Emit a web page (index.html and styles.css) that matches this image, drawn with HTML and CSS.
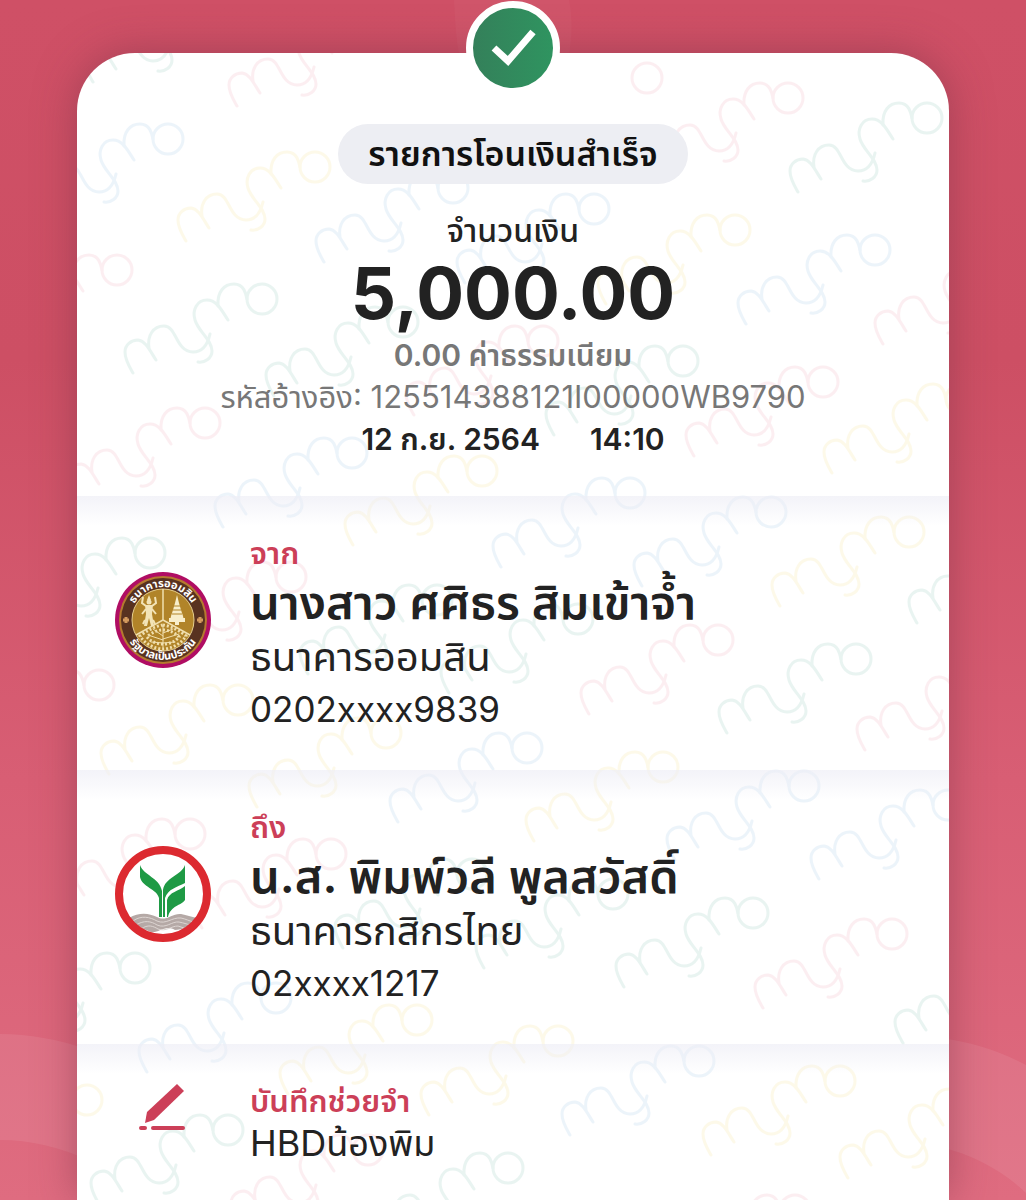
FILE: index.html
```html
<!DOCTYPE html>
<html lang="th">
<head>
    <meta charset="UTF-8">
    <meta name="viewport" content="width=device-width, initial-scale=1.0">
    <title>รายการโอนเงินสำเร็จ</title>
    <link rel="stylesheet" href="styles.css">
</head>
<body>
    <!-- background rings -->
    <svg class="rings" viewBox="0 0 1026 1200" preserveAspectRatio="xMidYMax slice" aria-hidden="true">
        <path class="ring" d="M0 1034 C30 1034 56 1039 90 1050 V1161 C60 1147 30 1140 0 1140 Z"/>
        <path class="ring" d="M940 1038 C972 1042 1000 1051 1026 1065 V1193 C1004 1172 975 1155 940 1147 Z"/>
        <path class="ring faint" d="M454 0 H569 C573 20 572 40 568 60 H460 C456 40 455 20 454 0 Z"/>
    </svg>

    <main class="card">
        <svg class="watermark" viewBox="77 53 872 1147" preserveAspectRatio="xMidYMin slice" aria-hidden="true">
            <defs>
                <g id="mark">
                    <path d="M-129 74 C-133 67 -137 61 -137 53 C-137 46 -131 41 -124 41 C-116 42 -112 52 -106 61"/>
                    <path d="M-113 49 C-115 37 -109 27 -98 27 C-85 27 -87 52 -69 53 C-59 53 -54 44 -52 35"/>
                    <path d="M-34 21 C-40 12 -45 1 -55 1 C-65 1 -70 11 -67 21 C-64 32 -50 41 -50 52 C-50 59 -57 64 -64 63"/>
                    <path d="M-44 7 C-45 -7 -38 -15 -28 -15 C-18 -15 -16 -5 -15 0"/>
                    <circle r="15"/>
                </g>
            </defs>
            <g class="blue">
                <use href="#mark" x="168" y="139"/>
                <use href="#mark" x="453" y="188"/>
                <use href="#mark" x="594" y="209"/>
                <use href="#mark" x="875" y="250"/>
                <use href="#mark" x="352" y="453"/>
                <use href="#mark" x="630" y="493"/>
                <use href="#mark" x="771" y="512"/>
                <use href="#mark" x="527" y="748"/>
                <use href="#mark" x="804" y="786"/>
                <use href="#mark" x="948" y="805"/>
                <use href="#mark" x="276" y="998"/>
                <use href="#mark" x="699" y="1061"/>
            </g>
            <g class="green">
                <use href="#mark" x="222" y="8"/>
                <use href="#mark" x="927" y="118"/>
                <use href="#mark" x="262" y="299"/>
                <use href="#mark" x="403" y="322"/>
                <use href="#mark" x="683" y="361"/>
                <use href="#mark" x="150" y="553"/>
                <use href="#mark" x="437" y="600"/>
                <use href="#mark" x="578" y="619"/>
                <use href="#mark" x="856" y="659"/>
                <use href="#mark" x="1046" y="549"/>
                <use href="#mark" x="472" y="874"/>
                <use href="#mark" x="613" y="894"/>
                <use href="#mark" x="753" y="913"/>
                <use href="#mark" x="1032" y="969"/>
                <use href="#mark" x="135" y="968"/>
                <use href="#mark" x="228" y="1130"/>
                <use href="#mark" x="508" y="1168"/>
            </g>
            <g class="yellow">
                <use href="#mark" x="315" y="167"/>
                <use href="#mark" x="735" y="230"/>
                <use href="#mark" x="961" y="399"/>
                <use href="#mark" x="482" y="471"/>
                <use href="#mark" x="909" y="532"/>
                <use href="#mark" x="238" y="700"/>
                <use href="#mark" x="386" y="733"/>
                <use href="#mark" x="663" y="767"/>
                <use href="#mark" x="417" y="1020"/>
                <use href="#mark" x="558" y="1041"/>
                <use href="#mark" x="840" y="1081"/>
                <use href="#mark" x="87" y="1100"/>
                <use href="#mark" x="977" y="1104"/>
            </g>
            <g class="pink">
                <use href="#mark" x="366" y="32"/>
                <use href="#mark" x="788" y="98"/>
                <use href="#mark" x="117" y="270"/>
                <use href="#mark" x="1012" y="270"/>
                <use href="#mark" x="543" y="341"/>
                <use href="#mark" x="823" y="382"/>
                <use href="#mark" x="205" y="423"/>
                <use href="#mark" x="291" y="577"/>
                <use href="#mark" x="718" y="640"/>
                <use href="#mark" x="994" y="676"/>
                <use href="#mark" x="99" y="685"/>
                <use href="#mark" x="190" y="834"/>
                <use href="#mark" x="331" y="854"/>
                <use href="#mark" x="892" y="934"/>
                <use href="#mark" x="368" y="1150"/>
                <use href="#mark" x="795" y="1210"/>
                <circle cx="647" cy="78" r="15"/>
            </g>
        </svg>

        <div class="badge">
            <svg viewBox="0 0 80 80" width="80" height="80" role="img" aria-label="สำเร็จ">
                <path d="M21 40 L35 53 L60 24" fill="none" stroke="#fff" stroke-width="7"/>
            </svg>
        </div>

        <header class="summary">
            <h1 class="status">รายการโอนเงินสำเร็จ</h1>
            <p class="amount-label">จำนวนเงิน</p>
            <p class="amount">5,000.00</p>
            <p class="fee">0.00 ค่าธรรมเนียม</p>
            <p class="ref">รหัสอ้างอิง: 125514388121I00000WB9790</p>
            <p class="date"><span>12 ก.ย. 2564</span><span>14:10</span></p>
        </header>

        <section class="row">
            <div class="icon">
                <svg viewBox="0 0 96 96" width="96" height="96" role="img" aria-label="ธนาคารออมสิน">
                    <defs>
                        <path id="arc-top" d="M15 48 A33 33 0 0 1 81 48"/>
                        <path id="arc-bottom" d="M8 48 A40 40 0 0 0 88 48"/>
                    </defs>
                    <circle cx="48" cy="48" r="48" fill="#b00d63"/>
                    <circle cx="48" cy="48" r="44" fill="#b5792f"/>
                    <circle cx="48" cy="48" r="42" fill="#583220"/>
                    <circle cx="48" cy="48" r="31" fill="#b18429" stroke="#e6cf8e" stroke-width="1"/>
                    <path d="M48 17 V48 L21 63 M48 48 L75 63" fill="none" stroke="#f0dfae" stroke-width="1.5"/>
                    <!-- deity -->
                    <g fill="#f3e4b7">
                        <circle cx="34" cy="30" r="2.5"/>
                        <path d="M34 23 L36 28 H32 Z M30 33 H38 L37 42 L39 54 H36 L34 46 L32 54 H29 L31 42 Z"/>
                    </g>
                    <path d="M31 34 L27 31 L28 25 M37 34 L41 31 L40 25 M31 37 L27 42 M37 37 L41 42 M30 48 L28 52 M38 48 L40 52" fill="none" stroke="#f3e4b7" stroke-width="2"/>
                    <!-- stupa -->
                    <path d="M62 23 L64 31 L66 38 L68 44 L69 49 H55 L56 44 L58 38 L60 31 Z M54 46 H70 V50 H54 Z M60 50 H64 V53 H60 Z" fill="#f8eecb"/>
                    <path d="M58 38 H66 M57 42 H67 M59 34 H65" stroke="#b18429" stroke-width="1"/>
                    <!-- tree -->
                    <path d="M48 76 V54 M48 64 L38 57 M48 61 L58 57 M48 68 L33 63 M48 67 L64 62 M48 71 L36 70 M48 71 L60 70" fill="none" stroke="#f0dfae" stroke-width="1" stroke-linecap="round"/>
                    <path d="M48 53 C56 54 67 60 71 64 C66 72 56 77 48 77 C40 77 30 72 25 64 C30 60 40 54 48 53 Z" fill="none" stroke="#f0dfae" stroke-width="3" stroke-dasharray="2 2"/>
                    <path d="M48 58 C54 58 61 61 64 65 C60 70 54 72 48 72 C42 72 36 70 32 65 C36 61 42 58 48 58 Z" fill="none" stroke="#f0dfae" stroke-width="3" stroke-dasharray="2 2"/>
                    <path d="M11 45 V51 M8 48 H14 M85 45 V51 M82 48 H88" stroke="#d39a5e" stroke-width="3"/>
                    <g class="seal-text">
                        <text><textPath href="#arc-top" startOffset="50%">ธนาคารออมสิน</textPath></text>
                        <text><textPath href="#arc-bottom" startOffset="50%">รัฐบาลเป็นประกัน</textPath></text>
                    </g>
                </svg>
            </div>
            <div class="info">
                <h2 class="label">จาก</h2>
                <p class="name">นางสาว ศศิธร สิมเข้าจ้ำ</p>
                <p class="bank">ธนาคารออมสิน</p>
                <p class="detail">0202xxxx9839</p>
            </div>
        </section>

        <section class="row">
            <div class="icon">
                <svg viewBox="0 0 96 96" width="96" height="96" role="img" aria-label="ธนาคารกสิกรไทย">
                    <circle cx="48" cy="48" r="44" fill="#fff"/>
                    <!-- waves -->
                    <path d="M14 72 C24 66 34 67 42 71 C51 76 57 67 66 68 C72 69 76 71 82 72 C78 80 66 84 60 84 C50 78 43 88 36 86 C28 83 20 79 14 72 Z" fill="#b5a9a6"/>
                    <path d="M18 75 C26 69 35 71 42 75 C51 79 57 71 66 72 C71 73 74 75 79 76 M21 79 C29 74 36 75 42 79 C51 83 57 75 64 76 C69 77 71 78 76 79 M26 83 C33 78 38 80 43 83 C51 86 56 80 63 80 L69 82" fill="none" stroke="#ddd5d2" stroke-width="1"/>
                    <circle cx="48" cy="48" r="44" fill="none" stroke="#dc2a30" stroke-width="8"/>
                    <!-- leaves -->
                    <g fill="#1f9a45">
                        <path d="M25 19 C29 30 44 31 47 45 V71 H44 V52 C42 43 27 41 25 31 Z"/>
                        <path d="M70 19 V37 C62 41 53 43 50 52 V71 H48 V44 C50 31 66 30 70 19 Z"/>
                        <path d="M70 40 V54 C66 60 56 59 53 71 H52 V54 C54 46 64 45 70 40 Z"/>
                    </g>
                </svg>
            </div>
            <div class="info">
                <h2 class="label">ถึง</h2>
                <p class="name">น.ส. พิมพ์วลี พูลสวัสดิ์</p>
                <p class="bank">ธนาคารกสิกรไทย</p>
                <p class="detail">02xxxx1217</p>
            </div>
        </section>

        <section class="row memo">
            <div class="icon">
                <svg viewBox="0 0 48 48" width="48" height="48" aria-hidden="true">
                    <path d="M38 0 L45 7 L15 36 L6 39 L8 28 Z" fill="#cc3f58"/>
                    <path d="M2 44 H6 M14 44 H44" stroke="#cc3f58" stroke-width="4" stroke-linecap="round"/>
                </svg>
            </div>
            <div class="info">
                <h2 class="label">บันทึกช่วยจำ</h2>
                <p class="detail">HBDน้องพิม</p>
            </div>
        </section>
    </main>
</body>
</html>
```
FILE: styles.css
```css
* {
    box-sizing: border-box;
}
body {
    margin: 0;
    padding: 53px 77px 0;
    min-height: 100vh;
    position: relative;
    display: flex;
    font-family: Inter, "Noto Sans Thai", "Noto Sans", sans-serif;
    color: #222;
    background: linear-gradient(#cf5066 0%, #cd4f64 30%, #d85e74 65%, #df6c80 100%);
}
h1, h2, p {
    margin: 0;
}
.rings {
    position: absolute;
    top: 0;
    left: 0;
    width: 100%;
    height: 100%;
}
.ring {
    fill: #fff;
    opacity: 0.08;
}
.ring.faint {
    opacity: 0.03;
}
.card {
    position: relative;
    flex: 1;
    background: #fff;
    border-radius: 58px 58px 0 0;
    box-shadow: 0 0 40px rgba(120, 50, 70, 0.5);
}
.watermark {
    position: absolute;
    top: 0;
    left: 0;
    width: 100%;
    height: 100%;
    border-radius: 58px 58px 0 0;
    fill: none;
    stroke-width: 3;
    stroke-linecap: round;
    opacity: 0.11;
}
.blue {
    stroke: #5f9fd8;
}
.green {
    stroke: #3f9f8c;
}
.yellow {
    stroke: #f0d040;
}
.pink {
    stroke: #e8708c;
}
.badge {
    position: absolute;
    top: -52px;
    left: 50%;
    width: 94px;
    height: 94px;
    margin-left: -47px;
    border: 7px solid #fff;
    border-radius: 50%;
    background: linear-gradient(90deg, #34805a, #2f9460);
}

/* top part */
.summary {
    position: relative;
    padding: 71px 20px 36px;
    display: flex;
    flex-direction: column;
    align-items: center;
    text-align: center;
    font-size: 30px;
    line-height: 42px;
}
.status {
    height: 60px;
    margin-bottom: 26px;
    padding: 0 30px;
    border-radius: 30px;
    background: #edeef3;
    color: #111;
    font-size: 34px;
    font-weight: 600;
    line-height: 60px;
}
.amount-label {
    font-size: 32px;
    font-weight: 500;
}
.amount {
    font-size: 71px;
    font-weight: 700;
    line-height: 82px;
}
.fee {
    color: #777;
    font-weight: 600;
}
.ref {
    color: #777;
    font-size: 31px;
}
.date {
    display: flex;
    gap: 50px;
    font-weight: 600;
}

/* from, to, memo */
.row {
    position: relative;
    display: flex;
    padding: 37px 20px 35px 0;
    background: linear-gradient(rgba(238, 238, 246, 0.7), rgba(255, 255, 255, 0) 30px);
}
.icon {
    width: 173px;
    padding: 39px 0 0 38px;
}
.icon svg {
    display: block;
}
.seal-text {
    fill: #fff;
    font-size: 11px;
    font-weight: 700;
    text-anchor: middle;
}
.info {
    flex: 1;
}
.label {
    color: #cc3f58;
    font-size: 31px;
    font-weight: 600;
    line-height: 40px;
}
.name {
    font-size: 47px;
    font-weight: 600;
    line-height: 58px;
}
.bank {
    font-size: 40px;
    line-height: 52px;
}
.detail {
    font-size: 35px;
    line-height: 52px;
}
.memo .icon {
    padding: 3px 0 0 62px;
}
.memo .detail {
    font-size: 36px;
    line-height: 44px;
}
```
